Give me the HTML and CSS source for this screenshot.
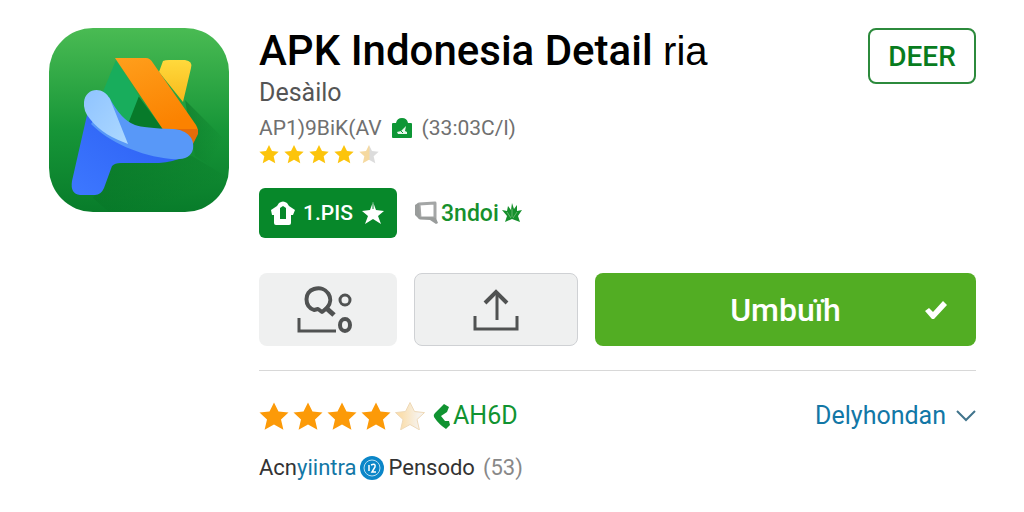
FILE: index.html
```html
<!DOCTYPE html>
<html lang="id">
<head>
  <meta charset="UTF-8">
  <title>APK Indonesia Detail</title>
  <link rel="stylesheet" href="styles.css">
</head>
<body>
  <svg class="defs" aria-hidden="true">
    <defs>
      <linearGradient id="half-small">
        <stop offset="0.5" stop-color="#f5d9a0"/>
        <stop offset="0.55" stop-color="#dcdcdc"/>
      </linearGradient>
      <linearGradient id="half-large">
        <stop offset="0.2" stop-color="#fbdfae"/>
        <stop offset="0.8" stop-color="#f6f2ec"/>
      </linearGradient>
      <symbol id="star" viewBox="0 0 30 28">
        <path d="M15 0.5l4.500 9 10 1.100-7.500 6.900 2.400 10.300-9.400-5.300-9.400 5.300 2.400-10.300L0.500 10.600l10-1.100z"/>
      </symbol>
    </defs>
  </svg>

  <div class="app">
    <svg class="app-icon" viewBox="0 0 180 184" role="img" aria-label="APK Indonesia">
      <defs>
        <linearGradient id="bg" x1="0" y1="0" x2="0" y2="1">
          <stop offset="0" stop-color="#4abb53"/>
          <stop offset="0.55" stop-color="#179638"/>
          <stop offset="1" stop-color="#087c2a"/>
        </linearGradient>
        <linearGradient id="orange" x1="0" y1="0" x2="0.4" y2="1">
          <stop offset="0" stop-color="#ff9f1c"/>
          <stop offset="1" stop-color="#fb8200"/>
        </linearGradient>
        <linearGradient id="yellow" x1="0" y1="0" x2="0" y2="1">
          <stop offset="0" stop-color="#ffd93c"/>
          <stop offset="1" stop-color="#f9b91c"/>
        </linearGradient>
        <linearGradient id="pale" x1="0" y1="0" x2="1" y2="1">
          <stop offset="0" stop-color="#8fc3ff"/>
          <stop offset="1" stop-color="#add9ff"/>
        </linearGradient>
        <linearGradient id="leg" x1="0" y1="1" x2="1" y2="0">
          <stop offset="0" stop-color="#3d78ff"/>
          <stop offset="1" stop-color="#2a5cf2"/>
        </linearGradient>
        <linearGradient id="shade" x1="0" y1="0" x2="1" y2="1">
          <stop offset="0" stop-color="#005f1c" stop-opacity="0.4"/>
          <stop offset="0.7" stop-color="#005f1c" stop-opacity="0"/>
        </linearGradient>
        <clipPath id="tile">
          <rect width="180" height="184" rx="44"/>
        </clipPath>
      </defs>
      <g clip-path="url(#tile)">
        <rect width="180" height="184" fill="url(#bg)"/>
        <path d="M64 136L143 128L180 150V184H60L44 170z" fill="url(#shade)"/>
        <path d="M136 72L180 116V150L146 128z" fill="url(#shade)"/>
      </g>
      <path d="M88 66L116 104H74z" fill="#077a2a"/>
      <path d="M67 32L90 68L77 101Q64 92 53 66z" fill="#18ad5c"/>
      <path d="M114 33Q116 32 120 32H136Q144 33 142 40L134 74L110 44z" fill="url(#yellow)"/>
      <path d="M66 30H97Q101 30 104 35L147 97Q149 100 149 104L115 103z" fill="url(#orange)"/>
      <path d="M114 101H149V106L144 116Q137 104 114 101z" fill="#e56c0a"/>
      <path d="M38 87L23 153Q21 166 31 167H46Q52 167 55 160L63 138Q66 135 71 135H110Q124 134 135 129z" fill="url(#leg)"/>
      <path d="M60 69Q72 92 86 97Q95 100 124 101C139 102 146 111 144 121C142 130 134 132 122 131C91 128 60 114 42 96z" fill="#5898f8"/>
      <path d="M35 74C36 60 54 57 61 71L79 116C64 110 51 104 41 91Q34 83 35 74z" fill="url(#pale)"/>
    </svg>

    <main class="details">
      <header class="header">
        <div>
          <h1>APK Indonesia Detail <span class="light">ria</span></h1>
          <p class="developer">Desàilo</p>
          <p class="meta">
            <span>AP1)9BiK(AV</span>
            <svg class="badge" viewBox="0 0 20 22" aria-hidden="true">
              <path d="M1 6H4Q5 1 10 1T16 6H19Q20 6 20 7V20Q20 21 19 21H1Q0 21 0 20V7Q0 6 1 6z" fill="#0d9635"/>
              <path d="M6 17L5 15L9 14L14 9L13 14L15 15V17z" fill="#e6f6ea"/>
              <path d="M8 13l3 3" stroke="#0d9635"/>
            </svg>
            <span>(33:03C/l)</span>
          </p>
          <div class="stars stars-small" role="img" aria-label="4.5">
            <svg><use href="#star"/></svg>
            <svg><use href="#star"/></svg>
            <svg><use href="#star"/></svg>
            <svg><use href="#star"/></svg>
            <svg class="half"><use href="#star"/></svg>
          </div>
        </div>
        <button class="btn btn-outline">DEER</button>
      </header>

      <div class="tags">
        <button class="btn btn-tag">
          <svg class="icon-home" viewBox="0 0 24 24" aria-hidden="true">
            <path fill="#fff" fill-rule="evenodd" d="M8 2Q12-1 16 2L18 5L24 9L22 14H20V22Q20 24 18 24H5Q3 24 3 22V14H1L0 9L6 5zM9 7V18H15V7L12 5z"/>
          </svg>
          1.PIS
          <svg class="icon-fav" viewBox="0 0 24 24" aria-hidden="true">
            <path fill="#fff" d="M12 1l3 8 8 1-6 5 3 8-8-5-8 5 3-8-6-5 8-1z"/>
            <path d="M12 2v6" stroke="#07882a"/>
          </svg>
        </button>
        <a class="tag-link" href="#">
          <svg class="icon-chat" viewBox="0 0 24 24" aria-hidden="true">
            <path d="M5 3L21 2V17L6 17z" fill="#fff" stroke="#a4a6a6" stroke-width="3" stroke-linejoin="round"/>
            <path d="M4 2L1 4V14L5 18L16 19L22 23L24 22L22 17L16 16H6L5 3z" fill="#999c9b"/>
          </svg>
          <span>3ndoi</span>
          <svg class="icon-leaf" viewBox="0 0 20 22" aria-hidden="true">
            <path fill="#16902c" d="M10 1l2 6 3-4v6l5-1-4 6 2 6-8-3-7 3 2-6-5-6 5 1 1-5 3 4z"/>
            <path d="M10 7v8M5 10l4 6M15 10l-4 6" stroke="#62b56a"/>
          </svg>
        </a>
      </div>

      <div class="actions">
        <button class="btn btn-grey" aria-label="Cari">
          <svg class="icon-search" viewBox="0 0 64 48" fill="none" stroke="#505252" stroke-width="4" aria-hidden="true">
            <path d="M18 24C8 20 8 6 18 3C31-1 39 13 31 22L26 26L22 23z" stroke-linejoin="round"/>
            <path d="M29 21l9 8" stroke-width="5"/>
            <circle cx="49" cy="14" r="5" stroke-width="3"/>
            <ellipse cx="49" cy="39" rx="5" ry="6"/>
            <path d="M3 32V45H40" stroke-width="3"/>
          </svg>
        </button>
        <button class="btn btn-grey bordered" aria-label="Bagikan">
          <svg class="icon-share" viewBox="0 0 46 42" fill="none" stroke="#505252" stroke-width="3" aria-hidden="true">
            <path d="M2 27V40H44V27M24 31V3"/>
            <path d="M12 14L23 3L34 14" stroke-width="4"/>
          </svg>
        </button>
        <button class="btn btn-main">
          <span>Umbuïh</span>
          <svg class="icon-check" viewBox="0 0 24 20" aria-hidden="true">
            <path d="M1 11L5 8L9 12L19 1L23 5L10 19H8z" fill="#fff"/>
          </svg>
        </button>
      </div>

      <section class="reviews">
        <div class="review-row">
          <div class="stars stars-large" role="img" aria-label="4.5">
            <svg><use href="#star"/></svg>
            <svg><use href="#star"/></svg>
            <svg><use href="#star"/></svg>
            <svg><use href="#star"/></svg>
            <svg class="half"><use href="#star"/></svg>
          </div>
          <a class="call" href="#">
            <svg class="icon-call" viewBox="0 0 18 26" aria-hidden="true">
              <path d="M11 1L16 4L14 9L8 13L12 18L16 18L17 22L13 26C10 24 4 19 1 14Q0 12 2 10z" fill="#109331"/>
            </svg>
            AH6D
          </a>
          <a class="more" href="#">
            Delyhondan
            <svg class="icon-down" viewBox="0 0 20 12" aria-hidden="true">
              <path d="M1 1l9 9 9-9" fill="none" stroke="#41748c" stroke-width="2"/>
            </svg>
          </a>
        </div>
        <p class="summary">
          <span>Acn<a href="#">yiintra</a></span>
          <svg class="icon-seal" viewBox="0 0 24 24" aria-hidden="true">
            <circle cx="12" cy="12" r="12" fill="#0b86c8"/>
            <circle cx="12" cy="12" r="8" fill="none" stroke="#b9def1"/>
            <path d="M9 9v6M11 9q5-2 4 2l-3 5h4" fill="none" stroke="#fff" stroke-width="1.500"/>
          </svg>
          <span>Pensodo</span>
          <span class="count">(53)</span>
        </p>
      </section>
    </main>
  </div>
</body>
</html>
```
FILE: styles.css
```css
* {
  box-sizing: border-box;
}

body {
  margin: 0;
  font-family: Roboto, "Liberation Sans", sans-serif;
  font-size: 22px;
  background-color: #fff;
  color: #333;
}

h1,
p {
  margin: 0;
}

a {
  text-decoration: none;
}

svg {
  display: block;
  flex-shrink: 0;
}

.defs {
  position: absolute;
  width: 0;
  height: 0;
}

.app {
  display: flex;
  align-items: flex-start;
  gap: 30px;
  padding: 28px 48px 24px 49px;
}

.app-icon {
  width: 180px;
  height: 184px;
}

.details {
  flex: 1;
}

.header {
  display: flex;
  justify-content: space-between;
  align-items: flex-start;
}

h1 {
  font-size: 42px;
  font-weight: 500;
  line-height: 46px;
  color: #000;
}

.light {
  font-family: "Liberation Sans", sans-serif;
  font-size: 40px;
  font-weight: 400;
  line-height: 1;
}

.developer {
  font-size: 25px;
  line-height: 38px;
  color: #555;
}

.meta {
  display: flex;
  align-items: center;
  gap: 10px;
  font-size: 21px;
  line-height: 32px;
  color: #707070;
}

.badge {
  width: 20px;
  height: 22px;
}

.stars {
  display: flex;
}

.stars-small {
  gap: 5px;
  fill: #fcc40c;
}

.stars-small svg {
  width: 20px;
  height: 20px;
}

.stars-small .half {
  fill: url(#half-small);
}

.stars-large {
  gap: 4px;
  fill: #fc9a08;
}

.stars-large svg {
  width: 30px;
  height: 28px;
}

.stars-large .half {
  fill: url(#half-large);
  stroke: #eed9b8;
}

.btn {
  display: flex;
  align-items: center;
  justify-content: center;
  padding: 0;
  border: none;
  border-radius: 8px;
  font-family: inherit;
  cursor: pointer;
}

.btn-outline {
  width: 108px;
  height: 56px;
  border: 2px solid #2c8a3c;
  background-color: #fff;
  color: #087c1e;
  font-size: 28px;
  font-weight: 500;
}

.tags {
  display: flex;
  align-items: center;
  gap: 17px;
  margin-top: 24px;
}

.btn-tag {
  gap: 8px;
  width: 138px;
  height: 50px;
  border-radius: 6px;
  background-color: #07882a;
  color: #fff;
  font-size: 21px;
  font-weight: 500;
}

.icon-home,
.icon-fav,
.icon-chat {
  width: 24px;
  height: 24px;
}

.tag-link {
  display: flex;
  align-items: center;
  gap: 3px;
  color: #16902c;
  font-size: 23px;
  font-weight: 500;
}

.icon-leaf {
  width: 20px;
  height: 22px;
}

.actions {
  display: grid;
  grid-template-columns: 138px 164px 1fr;
  gap: 17px;
  margin-top: 35px;
  padding-bottom: 24px;
  border-bottom: 1px solid #d8d8d8;
}

.btn-grey {
  height: 73px;
  background-color: #eff0f0;
}

.bordered {
  border: 1px solid #cfd1d4;
}

.icon-search {
  width: 64px;
  height: 48px;
}

.icon-share {
  width: 46px;
  height: 42px;
}

.btn-main {
  display: grid;
  grid-template-columns: 1fr auto 1fr;
  height: 73px;
  padding-right: 28px;
  padding-left: 28px;
  background-color: #52ad23;
  color: #fff;
  font-size: 32px;
  font-weight: 500;
}

.btn-main span {
  grid-column: 2;
}

.icon-check {
  width: 24px;
  height: 20px;
  justify-self: end;
}

.reviews {
  padding-top: 29px;
}

.review-row {
  display: flex;
  align-items: center;
  font-size: 25px;
  line-height: 32px;
}

.call {
  display: flex;
  align-items: center;
  gap: 2px;
  margin-left: 8px;
  color: #109331;
}

.icon-call {
  width: 18px;
  height: 26px;
}

.more {
  display: flex;
  align-items: center;
  gap: 10px;
  margin-left: auto;
  color: #1277a6;
}

.icon-down {
  width: 20px;
  height: 12px;
}

.summary {
  display: flex;
  align-items: center;
  gap: 4px;
  margin-top: 20px;
  line-height: 32px;
}

.summary a {
  color: #1277a6;
}

.icon-seal {
  width: 24px;
  height: 24px;
}

.count {
  margin-left: 4px;
  color: #888;
}
```
